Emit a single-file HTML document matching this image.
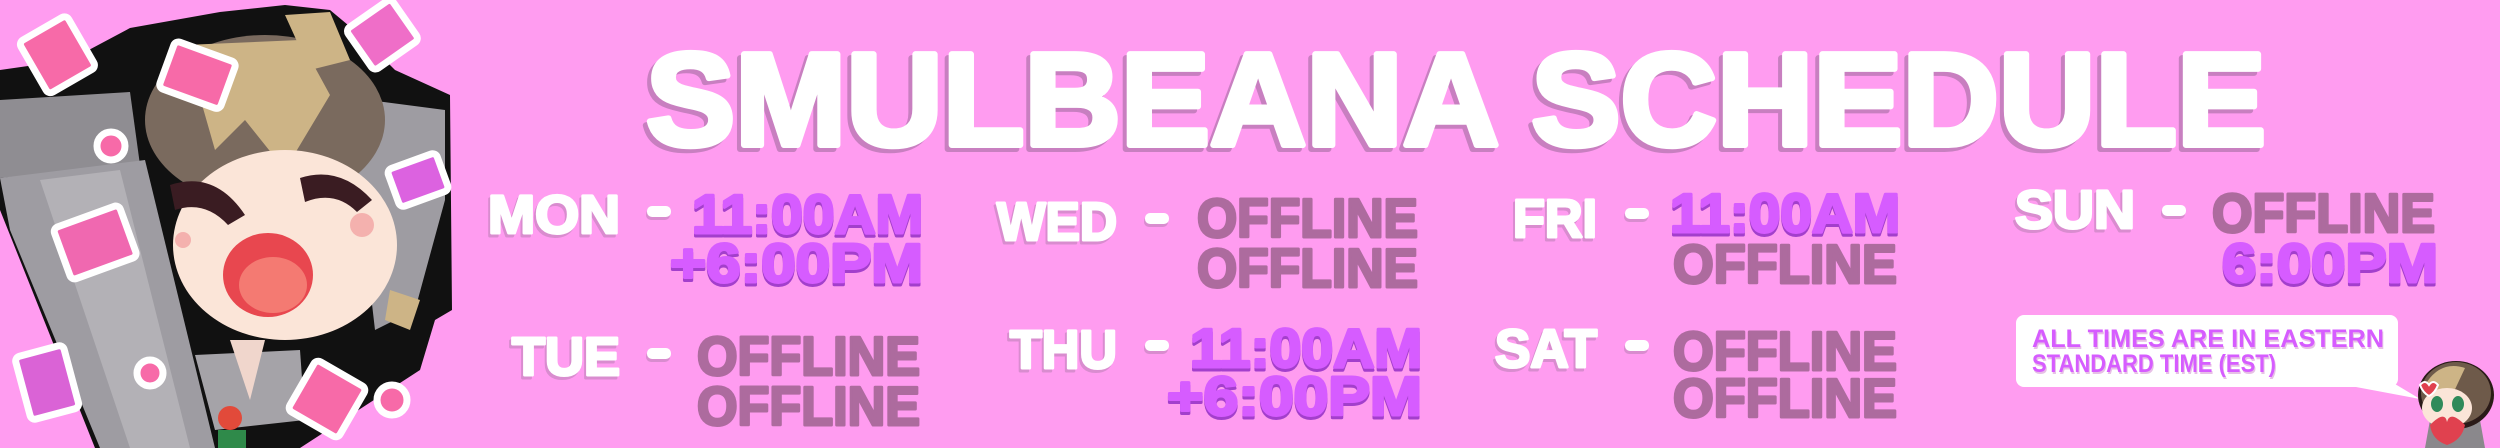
<!DOCTYPE html>
<html><head><meta charset="utf-8"><style>
html,body{margin:0;padding:0;background:#ff9cf0;}
svg{display:block}
text{font-family:"Liberation Sans",sans-serif;font-weight:bold;}
</style></head><body>
<svg width="2500" height="448" viewBox="0 0 2500 448" xmlns="http://www.w3.org/2000/svg">
<rect width="2500" height="448" fill="#ff9cf0"/>
<defs>
<style>
.lbl{fill:#fff;stroke:#fff;stroke-width:3;stroke-linejoin:round}
.lbs{fill:#d98ccf;stroke:#d98ccf;stroke-width:3;stroke-linejoin:round}
.pur{fill:#d65cff;stroke:#d65cff;stroke-width:3;stroke-linejoin:round}
.purs{fill:#a33fcc;stroke:#a33fcc;stroke-width:3;stroke-linejoin:round}
.off{fill:#ad6b9e;stroke:#ad6b9e;stroke-width:3;stroke-linejoin:round}
</style>
</defs>

<!-- Left character -->
<g>
<path d="M0 70 L70 60 L130 28 L220 12 L285 5 L330 10 L360 35 L395 70 L450 95 L452 310 L435 320 L420 370 L300 448 L95 448 L0 210 Z" fill="#111"/>
<path d="M0 100 L130 92 L140 165 L0 178 Z" fill="#8f8d92"/>
<path d="M0 178 L145 160 L215 448 L100 448 L10 230 Z" fill="#9e9ca2"/>
<path d="M40 180 L120 170 L190 448 L130 448 Z" fill="#b3b1b6"/>
<path d="M330 95 L445 110 L445 200 L415 310 L375 330 L360 200 Z" fill="#9e9ca2"/>
<path d="M195 355 L300 350 L305 420 L215 430 Z" fill="#a5a3a8"/>
<ellipse cx="265" cy="120" rx="120" ry="85" fill="#7a6a5e"/>
<path d="M185 45 L300 40 L330 95 L285 170 L245 120 L215 150 Z" fill="#cdb486"/>
<path d="M285 15 L330 12 L350 60 L310 70 Z" fill="#cdb486"/>
<path d="M390 290 L420 300 L410 330 L385 320 Z" fill="#cdb486"/>
<ellipse cx="285" cy="245" rx="112" ry="95" fill="#fbe5d8"/>
<path d="M170 185 Q215 170 245 215 L228 225 Q205 200 175 210 Z" fill="#3a1c22"/>
<path d="M300 178 Q340 165 372 200 L357 212 Q335 190 305 202 Z" fill="#3a1c22"/>
<ellipse cx="268" cy="275" rx="45" ry="42" fill="#e8474f"/>
<ellipse cx="273" cy="285" rx="34" ry="28" fill="#f47a72"/>
<circle cx="362" cy="225" r="12" fill="#f3a4a4" opacity=".8"/>
<circle cx="183" cy="240" r="8" fill="#f3a4a4" opacity=".8"/>
<path d="M230 340 Q245 385 250 400 L265 340 Z" fill="#f0d6cc"/>
<circle cx="230" cy="418" r="12" fill="#e24a3a"/>
<rect x="218" y="430" width="28" height="18" fill="#2f8a4a"/>
<g stroke="#fff" stroke-width="7" stroke-linejoin="round">
<rect x="30" y="25" width="55" height="60" rx="5" fill="#f76aa8" transform="rotate(-30 57 55)"/>
<rect x="165" y="50" width="65" height="50" rx="5" fill="#f76aa8" transform="rotate(20 197 75)"/>
<rect x="355" y="10" width="55" height="50" rx="5" fill="#ef6ec8" transform="rotate(-35 382 35)"/>
<rect x="392" y="160" width="52" height="40" rx="5" fill="#dc62e0" transform="rotate(-20 418 180)"/>
<rect x="60" y="215" width="70" height="55" rx="5" fill="#f068b0" transform="rotate(-20 95 242)"/>
<rect x="22" y="350" width="50" height="65" rx="5" fill="#da63d6" transform="rotate(-15 47 382)"/>
<rect x="298" y="370" width="58" height="58" rx="5" fill="#f76aa8" transform="rotate(30 327 399)"/>
<circle cx="111" cy="146" r="14" fill="#f76aa8"/>
<circle cx="150" cy="373" r="13" fill="#f76aa8"/>
<circle cx="392" cy="400" r="15" fill="#f76aa8"/>
</g>
</g>

<!-- Title -->
<text x="642" y="149" font-size="132" textLength="1620" lengthAdjust="spacingAndGlyphs" fill="#c87fc0" stroke="#c87fc0" stroke-width="6" stroke-linejoin="round">SMULBEANA SCHEDULE</text>
<text x="646" y="145" font-size="132" textLength="1620" lengthAdjust="spacingAndGlyphs" fill="#fff" stroke="#fff" stroke-width="6" stroke-linejoin="round">SMULBEANA SCHEDULE</text>

<!-- Labels -->
<g font-size="54">
<text class="lbs" x="486" y="236" textLength="132" lengthAdjust="spacingAndGlyphs">MON</text>
<text class="lbl" x="488" y="233" textLength="132" lengthAdjust="spacingAndGlyphs">MON</text>
<text class="lbs" x="510" y="378" textLength="108" lengthAdjust="spacingAndGlyphs">TUE</text>
<text class="lbl" x="512" y="375" textLength="108" lengthAdjust="spacingAndGlyphs">TUE</text>
<text class="lbs" x="995" y="243" textLength="120" lengthAdjust="spacingAndGlyphs">WED</text>
<text class="lbl" x="997" y="240" textLength="120" lengthAdjust="spacingAndGlyphs">WED</text>
<text class="lbs" x="1008" y="371" textLength="107" lengthAdjust="spacingAndGlyphs">THU</text>
<text class="lbl" x="1010" y="368" textLength="107" lengthAdjust="spacingAndGlyphs">THU</text>
<text class="lbs" x="1511" y="240" textLength="84" lengthAdjust="spacingAndGlyphs">FRI</text>
<text class="lbl" x="1513" y="237" textLength="84" lengthAdjust="spacingAndGlyphs">FRI</text>
<text class="lbs" x="1493" y="370" textLength="102" lengthAdjust="spacingAndGlyphs">SAT</text>
<text class="lbl" x="1495" y="367" textLength="102" lengthAdjust="spacingAndGlyphs">SAT</text>
<text class="lbs" x="2013" y="231" textLength="120" lengthAdjust="spacingAndGlyphs">SUN</text>
<text class="lbl" x="2015" y="228" textLength="120" lengthAdjust="spacingAndGlyphs">SUN</text>
</g>
<!-- dashes -->
<g fill="#d98ccf">
<rect x="646" y="209" width="24" height="11" rx="5"/><rect x="646" y="351" width="24" height="11" rx="5"/>
<rect x="1144" y="216" width="24" height="11" rx="5"/><rect x="1144" y="343" width="24" height="11" rx="5"/>
<rect x="1624" y="211" width="24" height="11" rx="5"/><rect x="1624" y="343" width="24" height="11" rx="5"/>
<rect x="2161" y="208" width="24" height="11" rx="5"/>
</g>
<g fill="#fff">
<rect x="647" y="206" width="24" height="11" rx="5"/><rect x="647" y="348" width="24" height="11" rx="5"/>
<rect x="1145" y="213" width="24" height="11" rx="5"/><rect x="1145" y="340" width="24" height="11" rx="5"/>
<rect x="1625" y="208" width="24" height="11" rx="5"/><rect x="1625" y="340" width="24" height="11" rx="5"/>
<rect x="2162" y="205" width="24" height="11" rx="5"/>
</g>

<!-- Times -->
<g font-size="55">
<text class="purs" x="692" y="236" textLength="231" lengthAdjust="spacingAndGlyphs">11:00AM</text>
<text class="pur" x="692" y="233" textLength="231" lengthAdjust="spacingAndGlyphs">11:00AM</text>
<text class="purs" x="670" y="285" textLength="253" lengthAdjust="spacingAndGlyphs">+6:00PM</text>
<text class="pur" x="670" y="282" textLength="253" lengthAdjust="spacingAndGlyphs">+6:00PM</text>
<text class="off" x="697" y="375" textLength="223" lengthAdjust="spacingAndGlyphs">OFFLINE</text>
<text class="off" x="697" y="425" textLength="223" lengthAdjust="spacingAndGlyphs">OFFLINE</text>

<text class="off" x="1197" y="237" textLength="221" lengthAdjust="spacingAndGlyphs">OFFLINE</text>
<text class="off" x="1197" y="287" textLength="221" lengthAdjust="spacingAndGlyphs">OFFLINE</text>
<text class="purs" x="1190" y="370" textLength="232" lengthAdjust="spacingAndGlyphs">11:00AM</text>
<text class="pur" x="1190" y="367" textLength="232" lengthAdjust="spacingAndGlyphs">11:00AM</text>
<text class="purs" x="1167" y="418" textLength="255" lengthAdjust="spacingAndGlyphs">+6:00PM</text>
<text class="pur" x="1167" y="415" textLength="255" lengthAdjust="spacingAndGlyphs">+6:00PM</text>

<text class="purs" x="1670" y="235" textLength="230" lengthAdjust="spacingAndGlyphs">11:00AM</text>
<text class="pur" x="1670" y="232" textLength="230" lengthAdjust="spacingAndGlyphs">11:00AM</text>
<text class="off" x="1673" y="283" textLength="224" lengthAdjust="spacingAndGlyphs">OFFLINE</text>
<text class="off" x="1673" y="370" textLength="224" lengthAdjust="spacingAndGlyphs">OFFLINE</text>
<text class="off" x="1673" y="417" textLength="224" lengthAdjust="spacingAndGlyphs">OFFLINE</text>

<text class="off" x="2212" y="232" textLength="223" lengthAdjust="spacingAndGlyphs">OFFLINE</text>
<text class="purs" x="2222" y="285" textLength="216" lengthAdjust="spacingAndGlyphs">6:00PM</text>
<text class="pur" x="2222" y="282" textLength="216" lengthAdjust="spacingAndGlyphs">6:00PM</text>
</g>

<!-- Speech bubble -->
<rect x="2016" y="315" width="382" height="72" rx="8" fill="#fff"/>
<path d="M2340 384 L2420 399 L2395 384 Z" fill="#fff"/>
<g font-size="25">
<text x="2033" y="349" textLength="352" lengthAdjust="spacingAndGlyphs" fill="#e7c0e6">ALL TIMES ARE IN EASTERN</text>
<text x="2032" y="347" textLength="352" lengthAdjust="spacingAndGlyphs" fill="#d65cff">ALL TIMES ARE IN EASTERN</text>
<text x="2033" y="374" textLength="244" lengthAdjust="spacingAndGlyphs" fill="#e7c0e6">STANDARD TIME (EST)</text>
<text x="2032" y="372" textLength="244" lengthAdjust="spacingAndGlyphs" fill="#d65cff">STANDARD TIME (EST)</text>
</g>

<!-- small chibi -->
<g>
<path d="M2425 448 L2430 420 L2480 420 L2485 448 Z" fill="#8a888c"/>
<ellipse cx="2456" cy="395" rx="38" ry="34" fill="#2a1a18"/>
<ellipse cx="2456" cy="393" rx="35" ry="31" fill="#6e5a4a"/>
<path d="M2425 385 Q2440 360 2465 368 L2450 400 Z" fill="#cdb486"/>
<ellipse cx="2447" cy="408" rx="25" ry="20" fill="#fbe5d8"/>
<ellipse cx="2437" cy="404" rx="6" ry="8" fill="#2f8a5a"/>
<ellipse cx="2458" cy="404" rx="6" ry="8" fill="#2f8a5a"/>
<path d="M2430 425 Q2445 410 2447 422 Q2450 410 2465 425 Q2462 440 2447 445 Q2432 440 2430 425 Z" fill="#e0414f"/>
<path d="M2420 385 q5 -6 9 0 q4 -6 9 0 q-3 8 -9 11 q-6 -3 -9 -11z" fill="#e0414f" stroke="#fff" stroke-width="2"/>
</g>
</svg>
</body></html>
